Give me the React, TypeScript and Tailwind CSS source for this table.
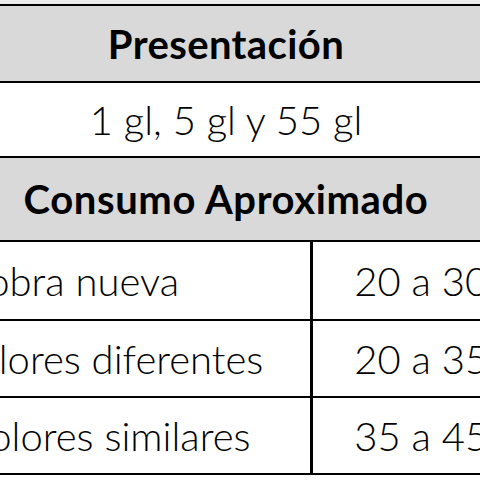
export default function App() {
  const rows = [
    ["En obra nueva", "20 a 30 m²/gl", "h-[79px]"],
    ["Sobre colores diferentes", "20 a 35 m²/gl", "h-[77px]"],
    ["Sobre colores similares", "35 a 45 m²/gl", "h-[77px]"],
  ];
  return (
    <div className="w-[480px] h-[480px] overflow-hidden bg-white text-black" style={{ fontFamily: "Lato, 'Open Sans', sans-serif" }}>
      <div className="h-[4px] bg-[#ececec]" />
      <div className="-ml-[179px] w-[810px] border-y-2 border-black">
        <div className="h-[75px] bg-[#d9d9d9] flex items-center justify-center text-[40px] font-bold tracking-[0.4px] leading-none">Presentación</div>
        <div className="h-[75px] border-t-2 border-black flex items-center justify-center text-[40px] font-light leading-none">1 gl, 5 gl y 55 gl</div>
        <div className="h-[84px] border-t-2 border-black bg-[#d9d9d9] flex items-center justify-center text-[40px] font-bold tracking-[0.6px] leading-none">Consumo Aproximado</div>
        {rows.map(([a, b, h]) => (
          <div key={a} className={`flex border-t-2 border-black text-[40px] font-light leading-none ${h}`}>
            <div className="w-[492px] flex items-center justify-center pr-[20px] border-r-[3px] border-black whitespace-nowrap">{a}</div>
            <div className="flex-1 flex items-center justify-center whitespace-nowrap">{b}</div>
          </div>
        ))}
      </div>
    </div>
  );
}
